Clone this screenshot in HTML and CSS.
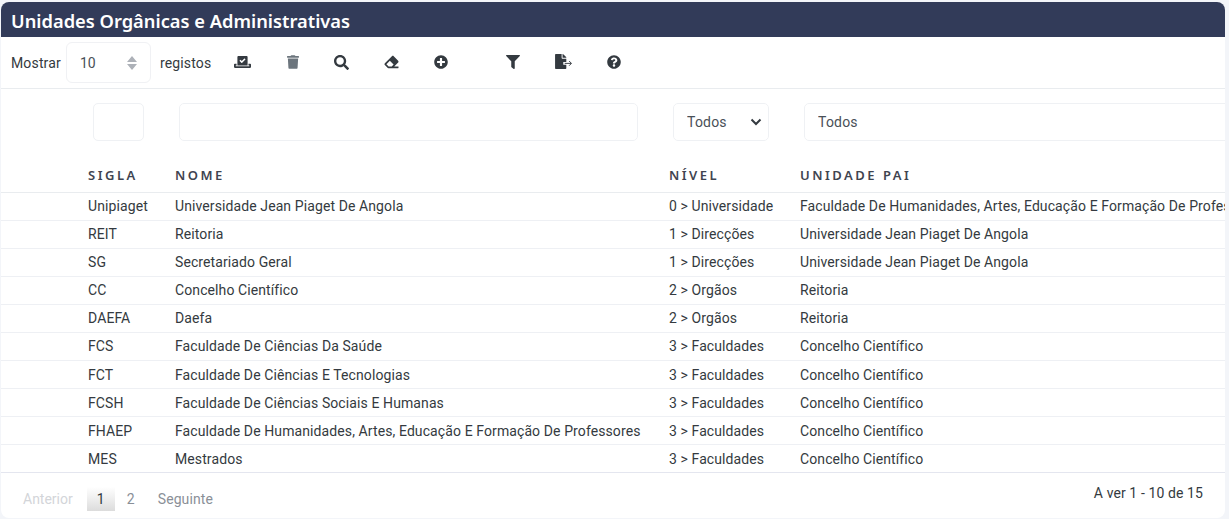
FILE: index.html
```html
<!DOCTYPE html>
<html lang="pt">
<head>
<meta charset="utf-8">
<title>Unidades Orgânicas e Administrativas</title>
<link rel="stylesheet" href="styles.css">
</head>
<body>
<main class="card">
  <h1 class="card-title">Unidades Orgânicas e Administrativas</h1>
  <div class="toolbar">
    <label class="length">Mostrar
      <select class="length-select"><option>10</option></select>
      registos</label>
    <div class="tools">
      <svg class="ico i1" viewBox="0 0 640 512"><path d="M608 320h-64v64h22.400c5.300 0 9.600 3.600 9.600 8v16c0 4.400-4.300 8-9.600 8H73.600c-5.300 0-9.600-3.600-9.600-8v-16c0-4.400 4.300-8 9.600-8H96v-64H32c-17.700 0-32 14.300-32 32v96c0 17.700 14.300 32 32 32h576c17.700 0 32-14.300 32-32v-96c0-17.700-14.300-32-32-32zm-96 64V64.300c0-17.900-14.500-32.300-32.400-32.300H160.400C142.500 32 128 46.500 128 64.300V384h384zM211.200 202l25.500-25.300c4.200-4.200 11-4.200 15.200.1l41.300 41.600 95.200-94.400c4.200-4.200 11-4.200 15.200.1l25.300 25.500c4.200 4.200 4.200 11-.1 15.200L300.500 292c-4.200 4.200-11 4.200-15.200-.1l-74.100-74.700c-4.300-4.200-4.200-11 0-15.200z"/></svg>
      <svg class="ico i2 muted" viewBox="0 0 448 512"><path d="M432 32H312l-9.400-18.700A24 24 0 0 0 281.100 0H166.800a23.720 23.720 0 0 0-21.400 13.300L136 32H16A16 16 0 0 0 0 48v32a16 16 0 0 0 16 16h416a16 16 0 0 0 16-16V48a16 16 0 0 0-16-16zM53.200 467a48 48 0 0 0 47.900 45h245.800a48 48 0 0 0 47.900-45L416 128H32z"/></svg>
      <svg class="ico i3" viewBox="0 0 512 512"><path d="M505 442.700L405.300 343c-4.500-4.500-10.600-7-17-7H372c27.600-35.300 44-79.700 44-128C416 93.100 322.900 0 208 0S0 93.100 0 208s93.100 208 208 208c48.300 0 92.700-16.400 128-44v16.300c0 6.400 2.500 12.500 7 17l99.700 99.700c9.400 9.400 24.600 9.400 33.900 0l28.300-28.300c9.400-9.400 9.400-24.600.1-34zM208 336c-70.700 0-128-57.200-128-128 0-70.700 57.200-128 128-128 70.700 0 128 57.200 128 128 0 70.700-57.200 128-128 128z"/></svg>
      <svg class="ico i4" viewBox="0 0 512 512"><path d="M497.941 273.941c18.745-18.745 18.745-49.137 0-67.882l-160-160c-18.745-18.745-49.137-18.746-67.883 0l-256 256c-18.745 18.745-18.745 49.137 0 67.882l96 96A48.004 48.004 0 0 0 144 480h356c6.627 0 12-5.373 12-12v-40c0-6.627-5.373-12-12-12H355.883l142.058-142.059zm-302.627-62.627l137.373 137.373L265.373 416H150.628l-80-80 124.686-124.686z"/></svg>
      <svg class="ico i5" viewBox="0 0 512 512"><path d="M256 8C119 8 8 119 8 256s111 248 248 248 248-111 248-248S393 8 256 8zm144 276c0 6.600-5.400 12-12 12h-92v92c0 6.600-5.400 12-12 12h-56c-6.600 0-12-5.400-12-12v-92h-92c-6.600 0-12-5.400-12-12v-56c0-6.600 5.400-12 12-12h92v-92c0-6.600 5.400-12 12-12h56c6.600 0 12 5.400 12 12v92h92c6.600 0 12 5.400 12 12v56z"/></svg>
      <svg class="ico i6" viewBox="0 0 512 512"><path d="M487.976 0H24.028C2.710 0-8.047 25.866 7.058 40.971L192 225.941V432c0 7.831 3.821 15.170 10.237 19.662l80 55.980C298.020 518.690 320 507.493 320 487.980V225.941l184.947-184.970C520.021 25.896 509.338 0 487.976 0z"/></svg>
      <svg class="ico i7" viewBox="0 0 576 512"><path d="M384 121.900c0-6.300-2.500-12.400-7-16.900L279.100 7c-4.500-4.500-10.600-7-17-7H256v128h128v-6.100zM384 270V160H248c-13.200 0-24-10.800-24-24V0H24C10.700 0 0 10.700 0 24v464c0 13.300 10.700 24 24 24h336c13.300 0 24-10.700 24-24V370H280v-100z"/><path d="M330 320h220M480 240l80 80-80 80" class="arrow"/></svg>
      <svg class="ico i8" viewBox="0 0 512 512"><path d="M504 256c0 136.997-111.043 248-248 248S8 392.997 8 256C8 119.083 119.043 8 256 8s248 111.083 248 248zM262.655 90c-54.497 0-89.255 22.957-116.549 63.758-3.536 5.286-2.353 12.415 2.715 16.258l34.699 26.310c5.205 3.947 12.621 3.008 16.665-2.122 17.864-22.658 30.113-35.797 57.303-35.797 20.429 0 45.698 13.148 45.698 32.958 0 14.976-12.363 22.667-32.534 33.976C247.128 238.528 216 254.941 216 296v4c0 6.627 5.373 12 12 12h56c6.627 0 12-5.373 12-12v-1.333c0-28.462 83.186-29.647 83.186-106.667 0-58.002-60.165-102-116.531-102zM256 338c-25.365 0-46 20.635-46 46 0 25.364 20.635 46 46 46s46-20.636 46-46c0-25.365-20.635-46-46-46z"/></svg>
    </div>
  </div>
  <div class="table-wrap">
    <table class="data">
      <colgroup><col class="c0"><col class="c1"><col class="c2"><col class="c3"><col class="c4"></colgroup>
      <thead>
        <tr class="filters">
          <td></td>
          <td class="f-sigla"><input class="field" type="text"></td>
          <td><input class="field" type="text"></td>
          <td><select class="field select-arrow"><option>Todos</option></select></td>
          <td><select class="field field-wide"><option>Todos</option></select></td>
        </tr>
        <tr class="heads">
          <th></th><th>SIGLA</th><th>NOME</th><th>NÍVEL</th><th>UNIDADE PAI</th>
        </tr>
      </thead>
      <tbody>
        <tr><td></td><td>Unipiaget</td><td>Universidade Jean Piaget De Angola</td><td>0 &gt; Universidade</td><td>Faculdade De Humanidades, Artes, Educação E Formação De Professores</td></tr>
        <tr><td></td><td>REIT</td><td>Reitoria</td><td>1 &gt; Direcções</td><td>Universidade Jean Piaget De Angola</td></tr>
        <tr><td></td><td>SG</td><td>Secretariado Geral</td><td>1 &gt; Direcções</td><td>Universidade Jean Piaget De Angola</td></tr>
        <tr><td></td><td>CC</td><td>Concelho Científico</td><td>2 &gt; Orgãos</td><td>Reitoria</td></tr>
        <tr><td></td><td>DAEFA</td><td>Daefa</td><td>2 &gt; Orgãos</td><td>Reitoria</td></tr>
        <tr><td></td><td>FCS</td><td>Faculdade De Ciências Da Saúde</td><td>3 &gt; Faculdades</td><td>Concelho Científico</td></tr>
        <tr><td></td><td>FCT</td><td>Faculdade De Ciências E Tecnologias</td><td>3 &gt; Faculdades</td><td>Concelho Científico</td></tr>
        <tr><td></td><td>FCSH</td><td>Faculdade De Ciências Sociais E Humanas</td><td>3 &gt; Faculdades</td><td>Concelho Científico</td></tr>
        <tr><td></td><td>FHAEP</td><td>Faculdade De Humanidades, Artes, Educação E Formação De Professores</td><td>3 &gt; Faculdades</td><td>Concelho Científico</td></tr>
        <tr><td></td><td>MES</td><td>Mestrados</td><td>3 &gt; Faculdades</td><td>Concelho Científico</td></tr>
      </tbody>
    </table>
  </div>
  <footer class="card-foot">
    <nav class="pager">
      <span class="pg disabled">Anterior</span>
      <span class="pg current">1</span>
      <span class="pg">2</span>
      <span class="pg next">Seguinte</span>
    </nav>
    <div class="info">A ver 1 - 10 de 15</div>
  </footer>
</main>
</body>
</html>
```
FILE: styles.css
```css
* { box-sizing: border-box; }
html, body { height: 100%; }
body {
  margin: 0;
  padding: 2px 4px 0 1px;
  background: #f3f5f9;
  font-family: Roboto, "Liberation Sans", sans-serif;
  font-size: 14px;
  color: #343a40;
  overflow: hidden;
}
.card {
  background: #fff;
  border-radius: 8px;
  overflow: hidden;
  height: 516px;
}
.card-title {
  margin: 0;
  height: 35px;
  padding: 0 10px;
  background: #323b59;
  color: #fff;
  font-family: "Noto Sans", sans-serif;
  font-size: 18.300px;
  font-weight: 600;
  line-height: 37px;
  white-space: nowrap;
}
.toolbar {
  display: flex;
  align-items: center;
  height: 52px;
  padding: 0 0 0 10px;
  border-bottom: 1px solid #e9ecef;
}
.length { display: flex; align-items: center; gap: 5px; width: 222px; color: #343a40; letter-spacing: .15px; }
.length-select {
  appearance: none;
  width: 85px;
  height: 41px;
  margin-right: 4px;
  padding: 0 13px;
  border: 1px solid #f0f1f4;
  border-radius: 6px;
  color: #495057;
  font: 14px Roboto, sans-serif;
  background: #fff url("data:image/svg+xml,%3Csvg xmlns='http://www.w3.org/2000/svg' width='10' height='16'%3E%3Cpath d='M5 1l5 6H0zM5 15L0 9h10z' fill='%23adb1b8'/%3E%3C/svg%3E") no-repeat right 13px center;
}
.tools { display: block; position: relative; height: 20px; flex: 1; }
.ico { position: absolute; top: 2px; fill: #343a40; height: 14px; }
.i1 { left: 1px; width: 17px; }
.i2 { left: 54px; width: 12px; }
.i3 { left: 101px; width: 15px; height: 15px; }
.i4 { left: 151px; width: 15px; }
.i5 { left: 201px; width: 14px; }
.i6 { left: 273px; width: 14px; }
.i7 { left: 322px; width: 17px; height: 15px; top: 1px; }
.i8 { left: 374px; width: 14px; }
.muted { fill: #6c757d; }
.arrow { fill: none; stroke: #343a40; stroke-width: 32; }
.table-wrap { overflow: hidden; height: 384px; border-bottom: 1px solid #e4e6ef; }
.data { border-collapse: collapse; table-layout: fixed; width: 1400px; }
.c0 { width: 73px; }
.c1 { width: 87px; }
.c2 { width: 494px; }
.c3 { width: 131px; }
.c4 { width: 615px; }
.data td, .data th { padding: 0 14px; white-space: nowrap; overflow: hidden; text-align: left; }
.data .filters td { height: 66px; padding: 0 17px 0 18px; vertical-align: middle; overflow: visible; }
.data .filters td.f-sigla { padding: 0 17px 0 19px; }
.field {
  display: block;
  width: 100%;
  height: 38px;
  padding: 0 13px;
  border: 1px solid #eff1f4;
  border-radius: 5px;
  background: #fff;
  color: #495057;
  font: 14px Roboto, sans-serif;
  letter-spacing: .2px;
  appearance: none;
}
.select-arrow { background: #fff url("data:image/svg+xml,%3Csvg xmlns='http://www.w3.org/2000/svg' width='12' height='8'%3E%3Cpath d='M1.500 1.500L6 6l4.500-4.500' fill='none' stroke='%23343a40' stroke-width='2'/%3E%3C/svg%3E") no-repeat right 6px center; }
.data .heads th {
  height: 37px;
  padding-top: 4px;
  border-bottom: 1px solid #e9ecef;
  color: #3f4450;
  font-family: "Noto Sans", sans-serif;
  font-size: 13px;
  font-weight: 600;
  letter-spacing: 2.500px;
}
tbody tr { height: 28.080px; }
tbody td { border-bottom: 1px solid #eef0f4; color: #343a40; font-size: 14px; letter-spacing: .1px; }
tbody tr:last-child td { border-bottom: 0; }
.card-foot { display: flex; justify-content: space-between; padding: 12px 22px 0; }
.pager { display: flex; align-items: center; height: 26px; margin-top: 1px; }
.pg { padding: 0 9px; height: 24px; line-height: 25px; color: #8a8f97; letter-spacing: .1px; }
.pg.disabled { padding: 0 14px 0 0; color: #d3d5d9; letter-spacing: 0; }
.pg.current { width: 28px; padding: 0; text-align: center; color: #343a40; background: linear-gradient(#fff, #dcdcdc); }
.pg.current + .pg { padding: 0 14px 0 12px; }
.pg.next { padding: 0 0 0 9px; }
.info { color: #343a40; letter-spacing: .1px; }
```
